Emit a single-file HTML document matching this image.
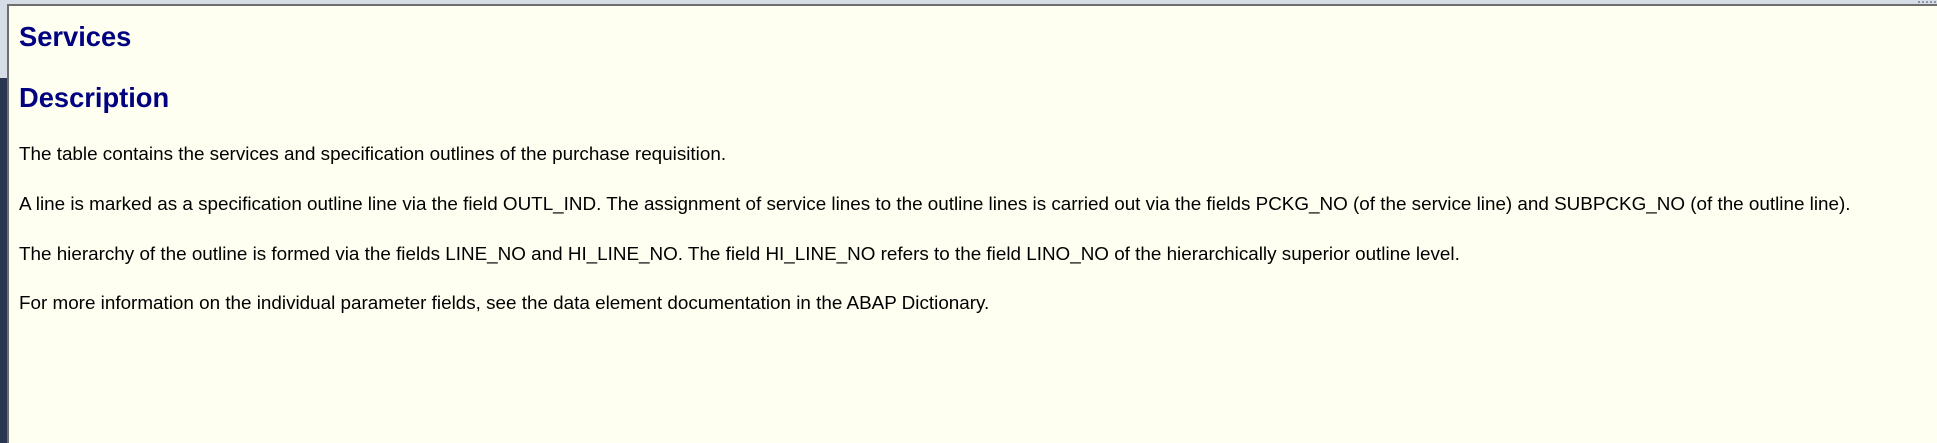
<!DOCTYPE html>
<html><head><meta charset="utf-8"><style>
html,body{margin:0;padding:0;width:1937px;height:443px;overflow:hidden;background:#d6dde6;}
.top{position:absolute;left:0;top:0;width:1937px;height:4px;background:#d6dde6;}
.leftdark{position:absolute;left:0;top:78px;width:7px;height:365px;background:#2a3650;}
.frame{position:absolute;left:7px;top:4px;width:1930px;height:439px;background:#fefff0;border-left:2px solid #6e6e6e;border-top:2px solid #6e6e6e;box-sizing:border-box;}
.t{position:absolute;left:19px;white-space:nowrap;font-family:"Liberation Sans",Arial,sans-serif;color:#000;font-size:18.85px;line-height:1;}
h1{position:absolute;left:19px;margin:0;font-family:"Liberation Sans",Arial,sans-serif;font-weight:bold;font-size:27.3px;color:#000080;line-height:1;white-space:nowrap;}
.dot{position:absolute;top:1px;width:2px;height:2px;background:#8a95a8;}
</style></head><body>
<div class="top"></div>
<div class="dot" style="left:1918px"></div><div class="dot" style="left:1922px"></div><div class="dot" style="left:1926px"></div><div class="dot" style="left:1930px"></div><div class="dot" style="left:1934px"></div>
<div class="leftdark"></div>
<div class="frame"></div>
<h1 style="top:23px">Services</h1>
<h1 style="top:84px">Description</h1>
<div class="t" style="top:145px">The table contains the services and specification outlines of the purchase requisition.</div>
<div class="t" style="top:195px">A line is marked as a specification outline line via the field OUTL_IND. The assignment of service lines to the outline lines is carried out via the fields PCKG_NO (of the service line) and SUBPCKG_NO (of the outline line).</div>
<div class="t" style="top:245px">The hierarchy of the outline is formed via the fields LINE_NO and HI_LINE_NO. The field HI_LINE_NO refers to the field LINO_NO of the hierarchically superior outline level.</div>
<div class="t" style="top:294px">For more information on the individual parameter fields, see the data element documentation in the ABAP Dictionary.</div>
</body></html>
